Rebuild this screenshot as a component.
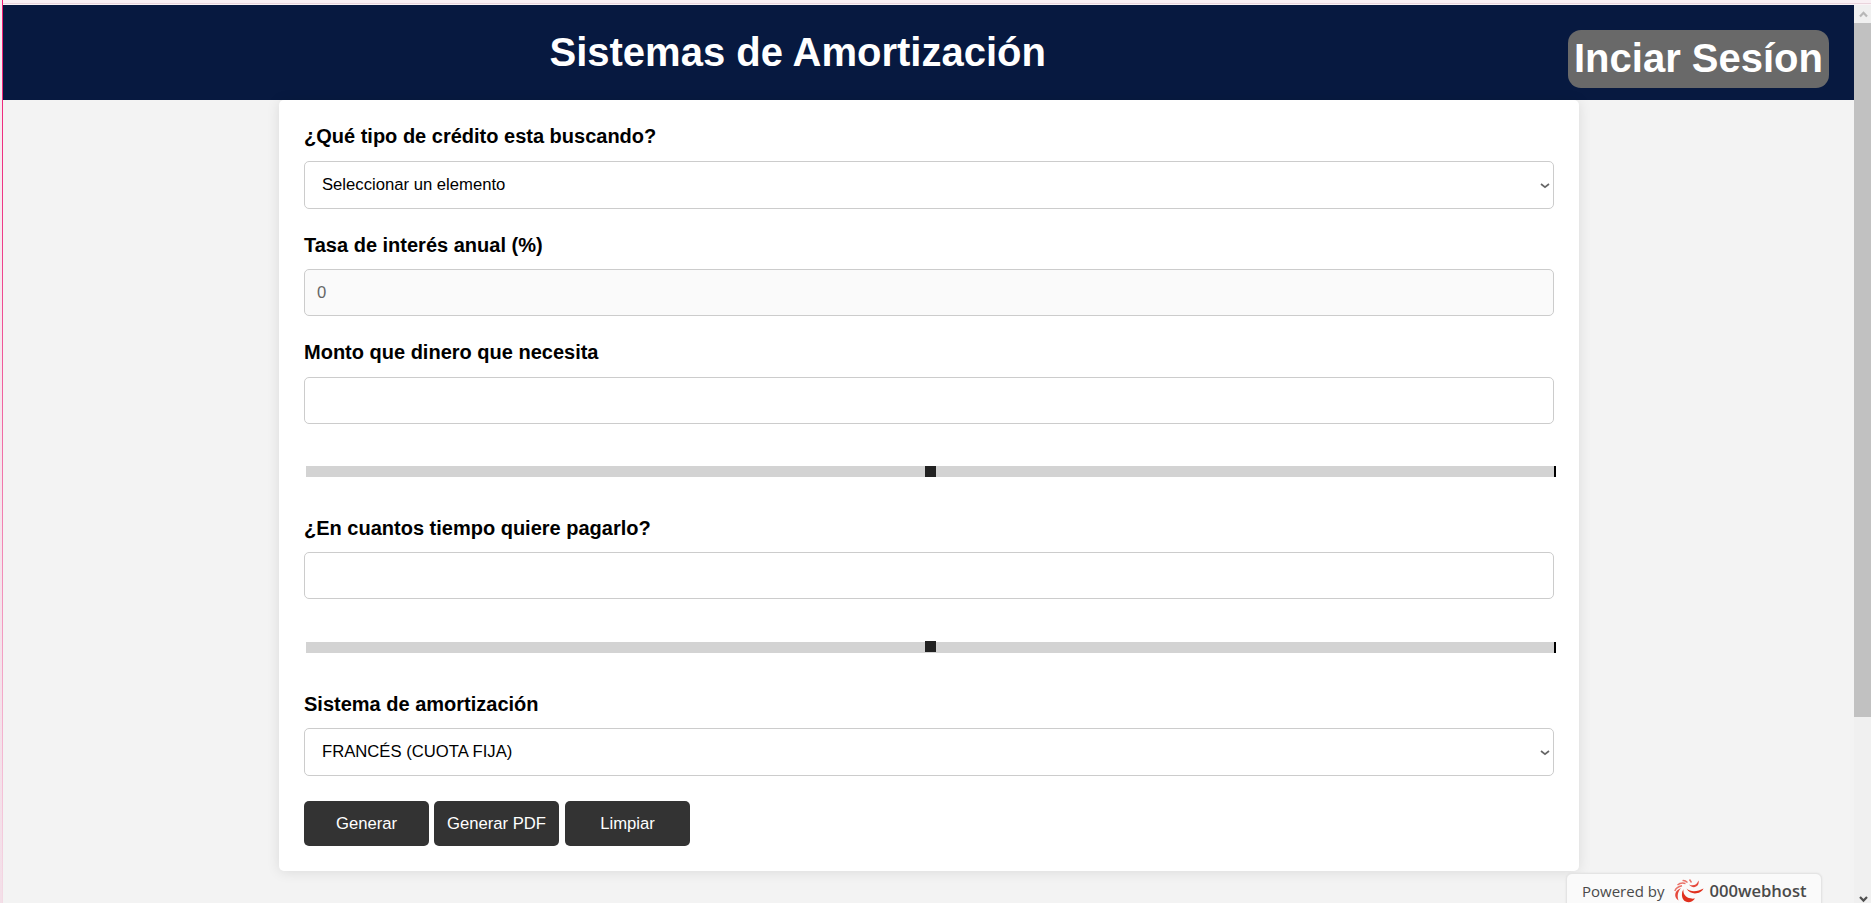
<div class="window">
  <div class="edge"></div>
  <div class="tabline"></div>
  <div class="page">
    <header>
      <h1>Sistemas de Amortización</h1>
      <button class="login">Inciar Sesíon</button>
    </header>
    <main>
      <section class="card">
        <h2>¿Qué tipo de crédito esta buscando?</h2>
        <div class="field select"><span>Seleccionar un elemento</span>
          <svg width="10" height="6" viewBox="0 0 10 6"><path d="M1 1 L5 4.2 L9 1" /></svg>
        </div>
        <h2 class="tight">Tasa de interés anual (%)</h2>
        <div class="field off">0</div>
        <h2>Monto que dinero que necesita</h2>
        <div class="field"></div>
        <div class="range"><i></i></div>
        <h2 class="tight">¿En cuantos tiempo quiere pagarlo?</h2>
        <div class="field"></div>
        <div class="range second"><i></i></div>
        <h2 class="tight">Sistema de amortización</h2>
        <div class="field select"><span>FRANCÉS (CUOTA FIJA)</span>
          <svg width="10" height="6" viewBox="0 0 10 6"><path d="M1 1 L5 4.2 L9 1" /></svg>
        </div>
        <div class="actions">
          <button>Generar</button><button>Generar PDF</button><button>Limpiar</button>
        </div>
      </section>
    </main>
  </div>
  <aside class="scroll">
    <svg class="up" width="17" height="18" viewBox="0 0 17 18"><path d="M6 11.6 L9.5 7.8 L13 11.6" /></svg>
    <div class="thumb"></div>
    <svg class="down" width="17" height="9" viewBox="0 0 17 9"><path d="M6 3 L9.5 6.6 L13 3" /></svg>
  </aside>
  <div class="badge">
    <span>Powered by</span>
    <svg width="30" height="24" viewBox="0 0 30 24">
      <path fill="#e0301e" d="M9.5 10C8.500 16 13 20.500 21 19.500C17.500 25 9 24.500 8 17Q7.600 13 9.500 10Z" />
      <path fill="#e0301e" d="M12.500 9.500C17 13.500 24 12.500 29.500 9.500C27.500 15 16.500 17 12.500 9.500Z" />
      <path fill="#e5483b" d="M15 5.500C19 7.500 23 6 24.500 1.500C26 7 19.500 11 15 5.500Z" />
      <path fill="#e5483b" d="M7 9C3.500 13 3 17 4.500 21.500C-.5 18 0 12 7 9Z" />
      <path fill="none" stroke="#ea7268" stroke-width="1.400" d="M.8 12C2 9 4.500 7.500 8 6.800M3.500 6C6 3.800 8.500 3.600 11.500 4.500M8.500 1.600C10.500 1.300 12 2 13.500 3.400M15.500 .5L17.500 3.500" />
    </svg>
    <b>000webhost</b>
  </div>
</div>

<style>
  :global(body) { overflow: hidden; }
  * { box-sizing: border-box; }
  .window {
    position: relative;
    display: grid;
    grid-template: 5px 898px / 3px 1851px 17px;
    width: 1871px;
    height: 903px;
    overflow: hidden;
    font-family: "Liberation Sans", Arial, sans-serif;
    background: #f3f3f3;
  }
  .tabline { grid-column: 2 / -1; background: linear-gradient(#f9f0f4 3px, #ead5dd 3px 4px, #fbf4f7 4px); }
  .edge {
    grid-row: 1 / -1;
    background:
      linear-gradient(#ee1c74, #ee3c88 240px, #f5bdd5 780px, #f3dbe5) right / 1px 100% no-repeat,
      linear-gradient(#f7ecf1, #f3dfe8);
  }
  .page { overflow: hidden; }
  header { display: flex; height: 95px; background: #071940; color: #fff; }
  h1 { margin: 24px 0 0 546.5px; width: 479.5px; font-size: 40px; line-height: 46px; white-space: nowrap; }
  button { border: 0; padding: 0; font-family: inherit; color: #fff; }
  .login {
    margin: 25px 0 0 539px; width: 261px; height: 58px; flex: none; padding-bottom: 2px;
    border-radius: 13px; background: #696969;
    font-size: 40px; line-height: 46px; font-weight: bold; white-space: nowrap;
  }
  main { padding-left: 276px; }
  .card {
    width: 1300px; height: 771px; padding: 25px; background: #fff; border-radius: 5px;
    box-shadow: 0 1px 13px rgba(0, 0, 0, .1);
  }
  h2 { margin: 0 0 13px; font-size: 20px; line-height: 23px; white-space: nowrap; }
  .tight { margin-bottom: 12px; }
  .field {
    height: 47px; margin-bottom: 25px; border: 1px solid #ccc; border-radius: 5px;
    padding: 0 12px; font-size: 16.67px; line-height: 45px;
  }
  .select {
    display: flex; justify-content: space-between; align-items: center;
    height: 48px; padding: 0 3px 0 17px; line-height: 45px;
  }
  .select span { padding-bottom: 1px; }
  .select svg { fill: none; stroke: #666; stroke-width: 1.7; margin-top: 2px; }
  .off { background: #fafafa; color: #666; }
  .range {
    display: flex; width: 1250px; height: 11px; margin: 42px 0 40px 2px;
    padding-left: 619px; background: #d3d3d3; border-right: 2px solid #000;
  }
  .range i { width: 11px; height: 11px; background: #222; }
  .second { margin-top: 43px; }
  .second i { margin-top: -1px; }
  .actions { display: flex; gap: 5px; }
  .actions button { width: 125px; height: 45px; border-radius: 5px; background: #333; font-size: 16.67px; }
  .actions button:last-child { margin-left: 1px; }
  .scroll { display: flex; flex-direction: column; background: #f0f0f0; }
  .scroll svg { fill: none; stroke: #b8b8b8; stroke-width: 2.2; }
  .scroll .down { margin-top: auto; stroke: #505050; }
  .thumb { height: 694px; background: #c1c1c1; }
  .badge {
    position: absolute; left: 1566px; top: 873px; width: 256px; height: 36px;
    display: flex; padding: 5px 0 0 15px; border: 1px solid #e4e4e4; border-radius: 6px 6px 0 0;
    background: #fafafa; box-shadow: 0 0 2px #ddd; color: #4a4a4a;
    font: 15px/24px "Open Sans", sans-serif; white-space: nowrap;
  }
  .badge svg { margin: 0 5px 0 10px; flex: none; }
  .badge b { font-weight: 600; font-size: 16.6px; }
</style>
